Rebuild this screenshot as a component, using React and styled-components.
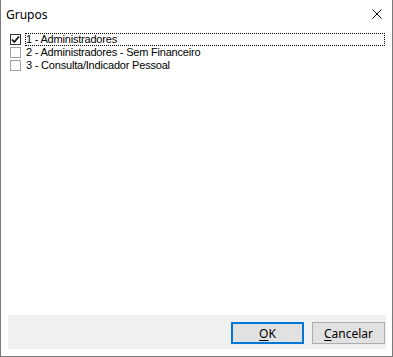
import React, { useState } from "react";
import styled, { createGlobalStyle } from "styled-components";

const GlobalStyle = createGlobalStyle`
  html, body {
    margin: 0;
    padding: 0;
    background: #ffffff;
  }
  * {
    box-sizing: border-box;
  }
`;

const Window = styled.div`
  width: 393px;
  height: 357px;
  background: #ffffff;
  border: 1px solid #7a7a7a;
  border-top: none;
  display: flex;
  flex-direction: column;
  font-family: "Liberation Sans", Arial, sans-serif;
  color: #000;
`;

const TitleBar = styled.div`
  height: 30px;
  display: flex;
  align-items: center;
  justify-content: space-between;
  padding: 0 10px 2px 5px;
`;

const Title = styled.span`
  font-family: "Noto Sans", "Liberation Sans", sans-serif;
  font-size: 12px;
`;

const CloseButton = styled.button`
  border: none;
  background: none;
  padding: 0;
  width: 10px;
  height: 10px;
  display: flex;
  cursor: default;
`;

const List = styled.div`
  flex: 1;
  padding: 3px 7px 0 9px;
  display: flex;
  flex-direction: column;
`;

const Row = styled.label`
  height: 13px;
  display: flex;
  align-items: center;
  gap: 4px;
  font-size: 11px;
  line-height: 13px;
  letter-spacing: -0.2px;
`;

const Box = styled.span`
  width: 11px;
  height: 11px;
  border: 1px solid ${(p) => (p.$checked ? "#333333" : "#a0a0a0")};
  background: #ffffff;
  display: flex;
  align-items: center;
  justify-content: center;
  flex: none;
`;

const ItemText = styled.span`
  flex: 1;
  height: 13px;
  border: 1px dotted ${(p) => (p.$focused ? "#000" : "transparent")};
  border-radius: 1px;
  line-height: 11px;
  white-space: nowrap;
`;

const Footer = styled.div`
  margin: 0 6px 7px 7px;
  height: 34px;
  background: #f0f0f0;
  display: flex;
  justify-content: flex-end;
  align-items: flex-start;
  gap: 8px;
  padding: 7px 1px 0 0;
`;

const Button = styled.button`
  width: 73px;
  height: 22px;
  background: #e1e1e1;
  border: ${(p) => (p.$default ? "2px solid #0078d7" : "1px solid #adadad")};
  font-family: "Noto Sans", "Liberation Sans", sans-serif;
  font-size: 12px;
  color: #000;
  padding: 0;
  cursor: default;

  u {
    text-decoration: underline;
    text-underline-offset: 2px;
  }
`;

const ITEMS = [
  "1 - Administradores",
  "2 - Administradores - Sem Financeiro",
  "3 - Consulta/Indicador Pessoal",
];

export default function App() {
  const [checked, setChecked] = useState([true, false, false]);

  return (
    <>
      <GlobalStyle />
      <Window>
        <TitleBar>
          <Title>Grupos</Title>
          <CloseButton>
            <svg width="10" height="10" viewBox="0 0 10 10">
              <path d="M0.5 0.5 L9.5 9.5 M9.5 0.5 L0.5 9.5" stroke="#111" strokeWidth="1" />
            </svg>
          </CloseButton>
        </TitleBar>
        <List>
          {ITEMS.map((item, i) => (
            <Row
              key={item}
              onClick={() => setChecked((c) => c.map((v, j) => (j === i ? !v : v)))}
            >
              <Box $checked={checked[i]}>
                {checked[i] && (
                  <svg width="9" height="9" viewBox="0 0 9 9">
                    <path d="M1 4.5 L3.3 7 L8 1.5" fill="none" stroke="#111" strokeWidth="1.8" />
                  </svg>
                )}
              </Box>
              <ItemText $focused={i === 0}>{item}</ItemText>
            </Row>
          ))}
        </List>
        <Footer>
          <Button $default>
            <u>O</u>K
          </Button>
          <Button>
            <u>C</u>ancelar
          </Button>
        </Footer>
      </Window>
    </>
  );
}
